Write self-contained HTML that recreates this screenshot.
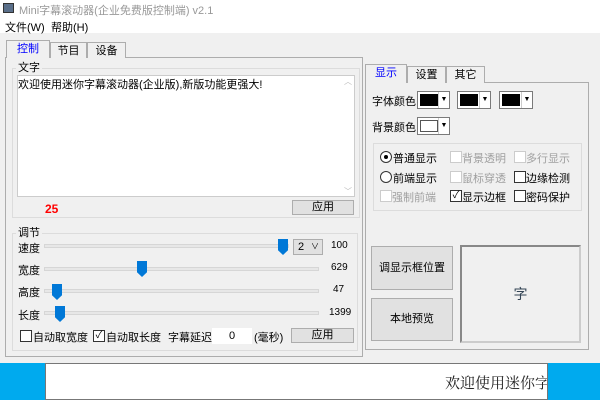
<!DOCTYPE html><html><head><meta charset="utf-8"><style>
*{box-sizing:border-box;margin:0;padding:0}
body{width:600px;height:400px;position:relative;overflow:hidden;background:#f0f0f0;font-family:"Liberation Sans","Noto Sans CJK SC",sans-serif;font-size:11px;color:#000}
.a{position:absolute;white-space:nowrap}
.btn{position:absolute;background:#e1e1e1;border:1px solid #adadad;text-align:center}
.tab{position:absolute;border:1px solid #adadad;border-bottom:none;background:#f0f0f0;text-align:center;line-height:16px}
.grp{position:absolute;border:1px solid #dcdcdc}
.lbl{position:absolute;background:#f0f0f0;padding:0 2px;line-height:12px}
.track{position:absolute;height:4px;background:#e7e7e7;border:1px solid #d6d6d6}
.thumb{position:absolute;width:10px;height:16px;background:#0078d7;clip-path:polygon(0 0,100% 0,100% 70%,50% 100%,0 70%)}
.cb{position:absolute;width:12px;height:12px;border:1px solid #333;background:#fff}
.cb.d{border-color:#ccc}
.rd{position:absolute;width:12px;height:12px;border:1px solid #333;border-radius:50%;background:#fff}
.col{position:absolute;height:18px;border:1px solid #7a7a7a;background:#fff}
.col i{position:absolute;left:2px;top:2px;width:18px;height:12px;background:#000;border:1px solid #000}
.col b{position:absolute;right:0;top:0;width:11px;height:16px;border-left:1px solid #ccc;font-size:7px;text-align:center;line-height:16px}
.gray{color:#a0a0a0}
</style></head><body>
<div class="a" style="left:0;top:0;width:600px;height:18px;background:#fff"></div>
<div class="a" style="left:3px;top:3px;width:11px;height:10px;background:#5a6f8a;border:1px solid #333"></div>
<div class="a" style="left:19px;top:2px;color:#999;font-size:11px">Mini字幕滚动器(企业免费版控制端) v2.1</div>
<div class="a" style="left:0;top:18px;width:600px;height:15px;background:#fff"></div>
<div class="a" style="left:5px;top:19px">文件(W)</div>
<div class="a" style="left:51px;top:19px">帮助(H)</div>

<div class="a" style="left:5px;top:57px;width:358px;height:300px;border:1px solid #adadad;background:#f0f0f0"></div>
<div class="tab" style="left:6px;top:40px;width:44px;height:18px;color:#0000ff;z-index:2">控制</div>
<div class="tab" style="left:50px;top:42px;width:37px;height:16px">节目</div>
<div class="tab" style="left:87px;top:42px;width:39px;height:16px">设备</div>

<div class="grp" style="left:12px;top:68px;width:348px;height:150px"></div>
<div class="lbl" style="left:16px;top:62px">文字</div>
<div class="a" style="left:17px;top:75px;width:338px;height:122px;background:#fff;border:1px solid #ccc"></div>
<div class="a" style="left:18px;top:76px">欢迎使用迷你字幕滚动器(企业版),新版功能更强大!</div>
<div class="a" style="left:344px;top:76px;color:#bbb;font-size:8px">︿</div>
<div class="a" style="left:344px;top:186px;color:#bbb;font-size:8px">﹀</div>
<div class="a" style="left:45px;top:202px;color:#f00;font-weight:bold;font-size:12px">25</div>
<div class="btn" style="left:292px;top:200px;width:62px;height:15px;line-height:13px">应用</div>

<div class="grp" style="left:12px;top:233px;width:346px;height:118px"></div>
<div class="lbl" style="left:16px;top:227px">调节</div>
<div class="a" style="left:18px;top:240px">速度</div>
<div class="track" style="left:44px;top:244px;width:245px"></div>
<div class="thumb" style="left:278px;top:239px"></div>
<div class="a" style="left:293px;top:239px;width:30px;height:16px;background:#e1e1e1;border:1px solid #adadad;padding-left:4px;line-height:14px">2<span style="position:absolute;right:3px;font-size:8px">∨</span></div>
<div class="a" style="left:331px;top:240px;font-size:10px">100</div>
<div class="a" style="left:18px;top:262px">宽度</div>
<div class="track" style="left:44px;top:267px;width:275px"></div>
<div class="thumb" style="left:137px;top:261px"></div>
<div class="a" style="left:331px;top:262px;font-size:10px">629</div>
<div class="a" style="left:18px;top:284px">高度</div>
<div class="track" style="left:44px;top:289px;width:275px"></div>
<div class="thumb" style="left:52px;top:284px"></div>
<div class="a" style="left:333px;top:284px;font-size:10px">47</div>
<div class="a" style="left:18px;top:307px">长度</div>
<div class="track" style="left:44px;top:311px;width:275px"></div>
<div class="thumb" style="left:55px;top:306px"></div>
<div class="a" style="left:329px;top:307px;font-size:10px">1399</div>
<div class="cb" style="left:20px;top:330px"></div>
<div class="a" style="left:33px;top:329px">自动取宽度</div>
<div class="cb" style="left:93px;top:330px;font-size:10px;line-height:10px;text-align:center">✓</div>
<div class="a" style="left:106px;top:329px">自动取长度</div>
<div class="a" style="left:168px;top:329px">字幕延迟</div>
<div class="a" style="left:212px;top:328px;width:40px;height:16px;background:#fff;text-align:center;line-height:16px">0</div>
<div class="a" style="left:254px;top:329px">(毫秒)</div>
<div class="btn" style="left:291px;top:328px;width:63px;height:15px;line-height:13px">应用</div>

<div class="a" style="left:365px;top:82px;width:224px;height:268px;border:1px solid #adadad;background:#f0f0f0"></div>
<div class="tab" style="left:365px;top:64px;width:42px;height:19px;color:#0000ff;z-index:2">显示</div>
<div class="tab" style="left:407px;top:66px;width:39px;height:17px">设置</div>
<div class="tab" style="left:446px;top:66px;width:39px;height:17px">其它</div>
<div class="a" style="left:372px;top:93px">字体颜色</div>
<div class="col" style="left:417px;top:91px;width:33px"><i></i><b>▼</b></div>
<div class="col" style="left:457px;top:91px;width:34px"><i></i><b>▼</b></div>
<div class="col" style="left:499px;top:91px;width:34px"><i></i><b>▼</b></div>
<div class="a" style="left:372px;top:119px">背景颜色</div>
<div class="col" style="left:417px;top:117px;width:33px"><i style="background:#fff;border-color:#555"></i><b>▼</b></div>
<div class="grp" style="left:373px;top:143px;width:209px;height:68px"></div>
<div class="rd" style="left:380px;top:151px"><span style="position:absolute;left:3px;top:3px;width:4px;height:4px;border-radius:50%;background:#000"></span></div>
<div class="a" style="left:393px;top:150px">普通显示</div>
<div class="cb d" style="left:450px;top:151px"></div><div class="a gray" style="left:462px;top:150px">背景透明</div>
<div class="cb d" style="left:514px;top:151px"></div><div class="a gray" style="left:526px;top:150px">多行显示</div>
<div class="rd" style="left:380px;top:171px"></div>
<div class="a" style="left:393px;top:170px">前端显示</div>
<div class="cb d" style="left:450px;top:171px"></div><div class="a gray" style="left:462px;top:170px">鼠标穿透</div>
<div class="cb" style="left:514px;top:171px"></div><div class="a" style="left:526px;top:170px">边缘检测</div>
<div class="cb d" style="left:380px;top:190px"></div><div class="a gray" style="left:392px;top:189px">强制前端</div>
<div class="cb" style="left:450px;top:190px;font-size:10px;line-height:10px;text-align:center">✓</div><div class="a" style="left:462px;top:189px">显示边框</div>
<div class="cb" style="left:514px;top:190px"></div><div class="a" style="left:526px;top:189px">密码保护</div>

<div class="btn" style="left:371px;top:246px;width:82px;height:44px;line-height:42px">调显示框位置</div>
<div class="btn" style="left:371px;top:298px;width:82px;height:43px;line-height:41px">本地预览</div>
<div class="a" style="left:460px;top:245px;width:121px;height:98px;border:2px solid #888;border-right-color:#ccc;border-bottom-color:#ccc;text-align:center;line-height:94px;font-size:14px;color:#345">字</div>

<div class="a" style="left:0;top:363px;width:600px;height:37px;background:#00aaee"></div>
<div class="a" style="left:45px;top:363px;width:503px;height:37px;background:#fff;border:1px solid #777;overflow:hidden"><span style="position:absolute;left:399px;top:8px;font-family:'Liberation Serif','Noto Serif CJK SC',serif;font-size:15px;color:#222">欢迎使用迷你字幕</span></div>
</body></html>
